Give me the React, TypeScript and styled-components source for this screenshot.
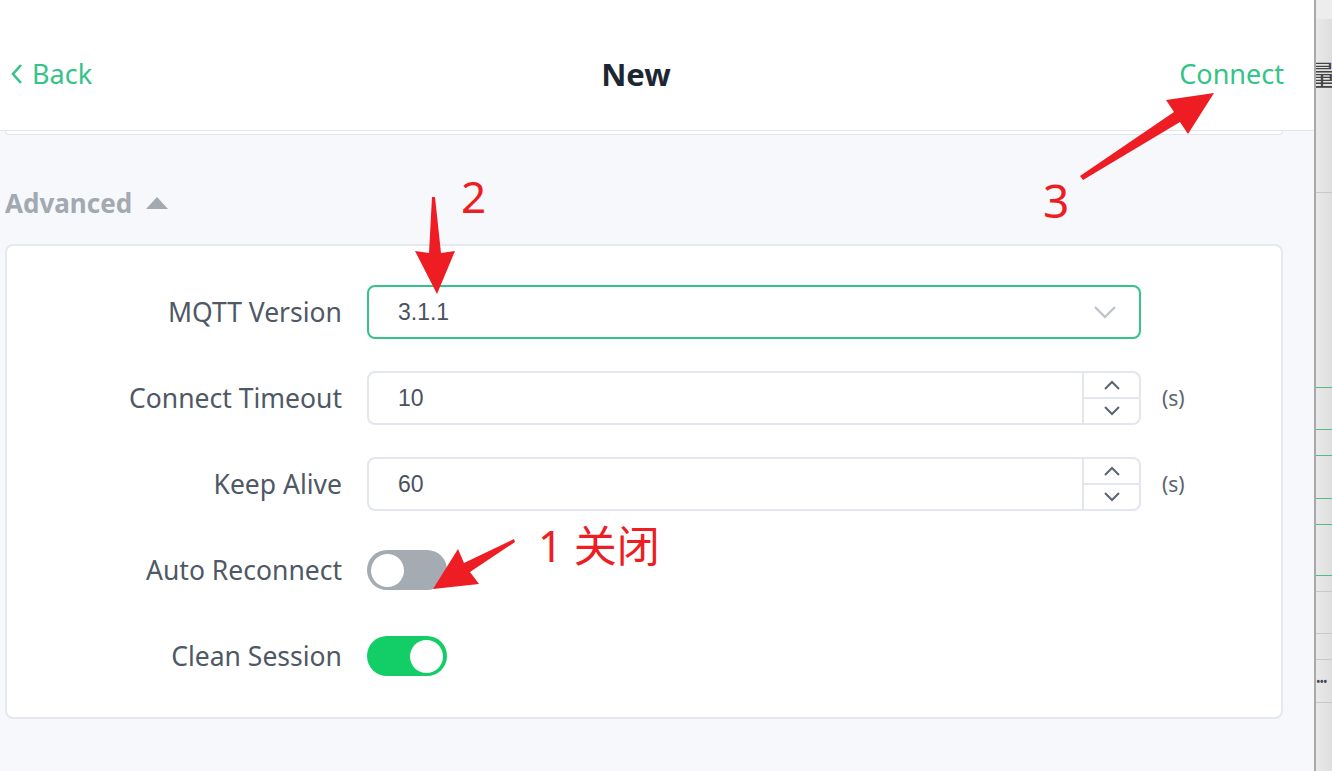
import React from "react";
import styled, { createGlobalStyle } from "styled-components";

const GlobalStyle = createGlobalStyle`
  html, body { margin: 0; padding: 0; }
  body {
    width: 1332px; height: 771px; overflow: hidden;
    font-family: "Noto Sans", "Open Sans", "Noto Sans CJK SC", sans-serif;
    background: #f7f8fc;
  }
`;

const green = "#34c388";
const red = "#ee1d23";

const Screen = styled.div`
  display: flex;
  width: 1332px;
  height: 771px;
`;

const Main = styled.div`
  position: relative;
  width: 1314px;
  height: 771px;
  background: #f7f8fc;
  display: flex;
  flex-direction: column;
`;

const Header = styled.header`
  height: 131px;
  background: #fff;
  border-bottom: 1px solid #e4e6ef;
  display: grid;
  grid-template-columns: 1fr auto 1fr;
  align-items: start;
  padding: 54px 30px 0 10px;
  box-sizing: border-box;
  flex-shrink: 0;
  line-height: 40px;
`;

const BackLink = styled.a`
  display: flex;
  align-items: center;
  gap: 8px;
  color: ${green};
  font-size: 27px;
  text-decoration: none;
  justify-self: start;
`;

const Title = styled.h1`
  margin: 0;
  font-size: 31px;
  line-height: 40px;
  font-weight: 700;
  color: #1d2734;
  transform: translateX(-11px);
`;

const ConnectLink = styled.a`
  justify-self: end;
  color: ${green};
  font-size: 27px;
  text-decoration: none;
`;

const PrevCardEdge = styled.div`
  margin: 0 31px 0 5px;
  height: 3px;
  background: #fff;
  border: 1px solid #e4e6ef;
  border-top: none;
  border-radius: 0 0 8px 8px;
`;

const Section = styled.section`
  padding: 51px 31px 0 5px;
`;

const SectionTitle = styled.div`
  display: flex;
  align-items: center;
  gap: 14px;
  color: #a2a9b1;
  font-size: 26px;
  font-weight: 700;
  height: 34px;
`;

const Card = styled.div`
  margin-top: 24px;
  background: #fff;
  border: 2px solid #e6e8f0;
  border-radius: 8px;
  padding: 39px 0 34px;
  display: grid;
  grid-template-columns: 335px 774px auto;
  column-gap: 25px;
  row-gap: 32px;
  align-items: center;
`;

const Label = styled.label`
  text-align: right;
  font-size: 26.5px;
  color: #4f5865;
`;

const Field = styled.div<{ $focus?: boolean }>`
  height: 54px;
  box-sizing: border-box;
  border: 2px solid ${(p) => (p.$focus ? green : "#e3e6ef")};
  border-radius: 8px;
  display: flex;
  align-items: center;
  background: #fff;
`;

const Value = styled.span`
  flex: 1;
  padding-left: 29px;
  font-family: "Liberation Sans", Arial, sans-serif;
  font-size: 23px;
  color: #4a5260;
`;

const SelectChevron = styled.span`
  display: flex;
  padding-right: 22px;
  color: #c0c4cc;
`;

const Stepper = styled.div`
  width: 55px;
  height: 100%;
  border-left: 2px solid #e3e6ef;
  display: flex;
  flex-direction: column;
`;

const StepBtn = styled.div<{ $top?: boolean }>`
  flex: 1;
  display: flex;
  align-items: center;
  justify-content: center;
  color: #5c6470;
  border-bottom: ${(p) => (p.$top ? "2px solid #e3e6ef" : "none")};
`;

const Unit = styled.span`
  font-size: 21px;
  color: #5c6470;
  margin-left: -4px;
`;

const Empty = styled.span``;

const ToggleRow = styled.div`
  height: 54px;
  display: flex;
  align-items: center;
`;

const Toggle = styled.div<{ $on?: boolean }>`
  width: 80px;
  height: 40px;
  border-radius: 20px;
  background: ${(p) => (p.$on ? "#13ce66" : "#a4abb3")};
  display: flex;
  align-items: center;
  justify-content: ${(p) => (p.$on ? "flex-end" : "flex-start")};
  padding: 0 4px;
  box-sizing: border-box;
`;

const Knob = styled.span`
  width: 33px;
  height: 33px;
  border-radius: 50%;
  background: #fff;
`;

const Overlay = styled.svg`
  position: absolute;
  inset: 0;
  pointer-events: none;
`;

const Note = styled.span<{ $x: number; $y: number; $size: number }>`
  position: absolute;
  left: ${(p) => p.$x}px;
  top: ${(p) => p.$y}px;
  font-size: ${(p) => p.$size}px;
  line-height: 1;
  color: ${red};
  font-family: "Noto Sans", "Noto Sans CJK SC", sans-serif;
  white-space: nowrap;
`;

const SideWindow = styled.div`
  position: relative;
  width: 18px;
  height: 771px;
  box-sizing: border-box;
  border-left: 2px solid #a9a9a9;
  background: linear-gradient(to right, #e9e9e9, #dedede);
  overflow: hidden;
`;

const SideTop = styled.div`
  height: 19px;
  background: #ededed;
`;

const SideGlyph = styled.span`
  position: absolute;
  left: -8px;
  top: 60px;
  font-family: "Noto Sans CJK SC", sans-serif;
  font-size: 28px;
  line-height: 1;
  color: #444;
`;

const SideLine = styled.div<{ $top: number; $green?: boolean }>`
  position: absolute;
  left: 0;
  right: 0;
  top: ${(p) => p.$top}px;
  height: 1px;
  background: ${(p) => (p.$green ? "#4fbd88" : "#c8c8c8")};
`;

const SideDots = styled.span`
  position: absolute;
  left: 0;
  top: 673px;
  font-size: 12px;
  letter-spacing: -1px;
  color: #445;
`;

const ChevronLeft = () => (
  <svg width="14" height="22" viewBox="0 0 14 22" fill="none">
    <path d="M11 2 L3 11 L11 20" stroke={green} strokeWidth="2.6" />
  </svg>
);

const ChevronDown = () => (
  <svg width="24" height="14" viewBox="0 0 24 14" fill="none">
    <path d="M2 2 L12 12 L22 2" stroke="currentColor" strokeWidth="2.4" />
  </svg>
);

const SmallChevron = ({ up }: { up?: boolean }) => (
  <svg width="18" height="10" viewBox="0 0 18 10" fill="none">
    <path d={up ? "M2 9 L9 2 L16 9" : "M2 1 L9 8 L16 1"} stroke="currentColor" strokeWidth="2" />
  </svg>
);

const TriangleUp = () => (
  <svg width="22" height="14" viewBox="0 0 22 14">
    <path d="M0 13 L11 1 L22 13 Z" fill="#a2a9b1" />
  </svg>
);

const NumberField = ({ value }: { value: string }) => (
  <Field>
    <Value>{value}</Value>
    <Stepper>
      <StepBtn $top>
        <SmallChevron up />
      </StepBtn>
      <StepBtn>
        <SmallChevron />
      </StepBtn>
    </Stepper>
  </Field>
);

const sideLines: { top: number; green?: boolean }[] = [
  { top: 192 },
  { top: 387, green: true },
  { top: 429, green: true },
  { top: 455, green: true },
  { top: 498, green: true },
  { top: 524, green: true },
  { top: 575, green: true },
  { top: 591 },
  { top: 633 },
  { top: 659 },
  { top: 702 },
];

export default function App() {
  return (
    <>
      <GlobalStyle />
      <Screen>
        <Main>
          <Header>
            <BackLink>
              <ChevronLeft />
              Back
            </BackLink>
            <Title>New</Title>
            <ConnectLink>Connect</ConnectLink>
          </Header>
          <PrevCardEdge />
          <Section>
            <SectionTitle>
              Advanced
              <TriangleUp />
            </SectionTitle>
            <Card>
              <Label>MQTT Version</Label>
              <Field $focus>
                <Value>3.1.1</Value>
                <SelectChevron>
                  <ChevronDown />
                </SelectChevron>
              </Field>
              <Empty />

              <Label>Connect Timeout</Label>
              <NumberField value="10" />
              <Unit>(s)</Unit>

              <Label>Keep Alive</Label>
              <NumberField value="60" />
              <Unit>(s)</Unit>

              <Label>Auto Reconnect</Label>
              <ToggleRow>
                <Toggle>
                  <Knob />
                </Toggle>
              </ToggleRow>
              <Empty />

              <Label>Clean Session</Label>
              <ToggleRow>
                <Toggle $on>
                  <Knob />
                </Toggle>
              </ToggleRow>
              <Empty />
            </Card>
          </Section>

          <Overlay width="1314" height="771" viewBox="0 0 1314 771">
            <polygon
              points="432,197 435,197 441,253 455,251 437,294 415,251 429,253"
              fill={red}
            />
            <polygon
              points="1080,176 1083,180 1180,122 1188,134 1214,93 1166,100 1174,112"
              fill={red}
            />
            <polygon
              points="514,539 515,542 470,572 479,584 433,589 458,549 464,563"
              fill={red}
            />
          </Overlay>
          <Note $x={461} $y={174} $size={44}>2</Note>
          <Note $x={1043} $y={177} $size={46}>3</Note>
          <Note $x={538} $y={524} $size={43}>1 关闭</Note>
        </Main>
        <SideWindow>
          <SideTop />
          <SideGlyph>量</SideGlyph>
          {sideLines.map((l) => (
            <SideLine key={l.top} $top={l.top} $green={l.green} />
          ))}
          <SideDots>•••</SideDots>
        </SideWindow>
      </Screen>
    </>
  );
}
